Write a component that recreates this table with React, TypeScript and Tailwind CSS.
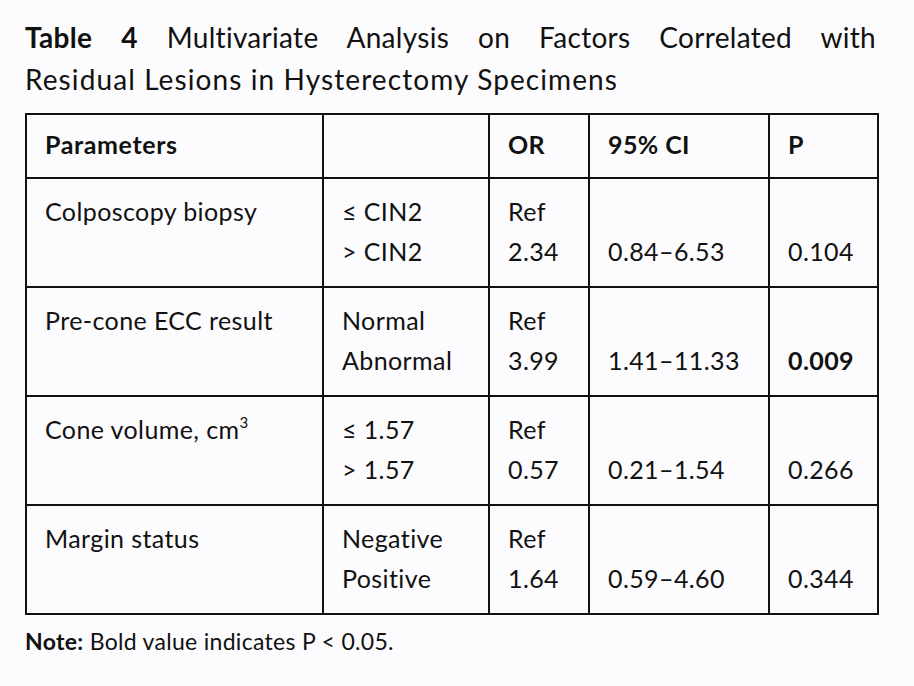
import React from "react";

type Row = {
  param: React.ReactNode;
  levels: [string, string];
  or: [string, string];
  ci: string;
  p: string;
  bold?: boolean;
};

const rows: Row[] = [
  { param: "Colposcopy biopsy", levels: ["≤ CIN2", "> CIN2"], or: ["Ref", "2.34"], ci: "0.84–6.53", p: "0.104" },
  { param: "Pre-cone ECC result", levels: ["Normal", "Abnormal"], or: ["Ref", "3.99"], ci: "1.41–11.33", p: "0.009", bold: true },
  {
    param: (
      <>
        Cone volume, cm<sup className="text-[15px] relative -top-[11px]">3</sup>
      </>
    ),
    levels: ["≤ 1.57", "> 1.57"],
    or: ["Ref", "0.57"],
    ci: "0.21–1.54",
    p: "0.266",
  },
  { param: "Margin status", levels: ["Negative", "Positive"], or: ["Ref", "1.64"], ci: "0.59–4.60", p: "0.344" },
];

const cell = "border-2 border-[#111] align-top pl-[18px] pr-2";

const App = () => {
  return (
    <div className="w-[914px] h-[686px] bg-[#fcfbfd] text-[#111] font-['Lato','Open_Sans',sans-serif] px-[25px] pt-4">
      <div className="w-[851px] text-[28px] leading-[42px]">
        <div className="text-justify [text-align-last:justify] tracking-[0.3px]">
          <span className="font-bold">Table</span> <span className="font-bold">4</span> Multivariate Analysis on
          Factors Correlated with
        </div>
        <div className="tracking-[1.1px]">Residual Lesions in Hysterectomy Specimens</div>
      </div>

      <table className="mt-[13px] border-collapse w-[852px] table-fixed text-[25px] leading-[40px] tracking-[0.4px]">
        <colgroup>
          <col className="w-[297px]" />
          <col className="w-[166px]" />
          <col className="w-[100px]" />
          <col className="w-[180px]" />
          <col className="w-[109px]" />
        </colgroup>
        <thead>
          <tr className="h-[64px] font-bold">
            <th className={`${cell} text-left pt-[9px] tracking-[0.6px]`}>Parameters</th>
            <th className={`${cell} text-left pt-[9px]`}></th>
            <th className={`${cell} text-left pt-[9px]`}>OR</th>
            <th className={`${cell} text-left pt-[9px]`}>95% CI</th>
            <th className={`${cell} text-left pt-[9px]`}>P</th>
          </tr>
        </thead>
        <tbody>
          {rows.map((row, i) => (
            <tr key={i} className="h-[109px]">
              <td className={`${cell} pt-[12px]`}>{row.param}</td>
              <td className={`${cell} pt-[12px]`}>
                <div>{row.levels[0]}</div>
                <div>{row.levels[1]}</div>
              </td>
              <td className={`${cell} pt-[12px]`}>
                <div>{row.or[0]}</div>
                <div>{row.or[1]}</div>
              </td>
              <td className={`${cell} pt-[52px]`}>{row.ci}</td>
              <td className={`${cell} pt-[52px] ${row.bold ? "font-bold" : ""}`}>{row.p}</td>
            </tr>
          ))}
        </tbody>
      </table>

      <p className="mt-[11px] text-[23px] leading-[30px] tracking-[0.3px]">
        <span className="font-bold">Note:</span> Bold value indicates P &lt; 0.05.
      </p>
    </div>
  );
};

export default App;
